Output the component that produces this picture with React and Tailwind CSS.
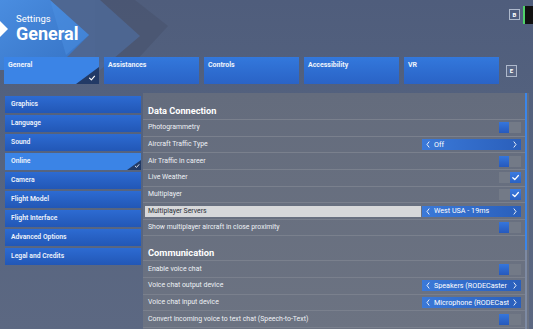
import React from "react";

const Check = ({ className = "" }) => (
  <svg viewBox="0 0 10 10" className={className} fill="none" stroke="white" strokeWidth="1.4" strokeLinecap="round" strokeLinejoin="round">
    <path d="M2 5.2 L4.2 7.3 L8.2 2.8" />
  </svg>
);

const Chev = ({ dir = "l" }) => (
  <svg viewBox="0 0 6 10" className="w-[4px] h-[7px] shrink-0" fill="none" stroke="white" strokeWidth="1.3" strokeLinecap="round" strokeLinejoin="round">
    {dir === "l" ? <path d="M4.5 1 L1.5 5 L4.5 9" /> : <path d="M1.5 1 L4.5 5 L1.5 9" />}
  </svg>
);

function Toggle({ on }) {
  return (
    <div className="w-[22px] h-[11px] bg-[#737a87] flex">
      {on ? (
        <div className="ml-auto w-[11px] h-[11px] bg-gradient-to-b from-[#3b7be0] to-[#2a62c4] flex items-center justify-center">
          <Check className="w-[9px] h-[9px]" />
        </div>
      ) : (
        <div className="w-[10px] h-[11px] bg-gradient-to-b from-[#3576dc] to-[#2659bd]" />
      )}
    </div>
  );
}

function Selector({ value }) {
  return (
    <div className="w-[99px] h-[11px] bg-gradient-to-r from-[#3b79d8] to-[#2a5fbb] flex items-center px-[4px] gap-[4px] text-white">
      <Chev dir="l" />
      <span className="flex-1 min-w-0 text-[7.2px] leading-none whitespace-nowrap overflow-hidden">{value}</span>
      <Chev dir="r" />
    </div>
  );
}

function Row({ label, control, highlight }) {
  return (
    <div className="h-[16.65px] flex items-center border-b border-[#7a808d] pl-[2px] pr-[4px]">
      <div className={`flex-1 h-[11px] flex items-center pl-[3px] mr-[1px] ${highlight ? "bg-[#d7d8da] text-[#2a2f38]" : "text-[#eef1f5]"}`}>
        <span className="text-[6.9px] leading-none whitespace-nowrap">{label}</span>
      </div>
      {control}
    </div>
  );
}

export default function App() {
  const tabs = ["General", "Assistances", "Controls", "Accessibility", "VR"];
  const side = ["Graphics", "Language", "Sound", "Online", "Camera", "Flight Model", "Flight Interface", "Advanced Options", "Legal and Credits"];
  return (
    <div className="w-[533px] h-[329px] overflow-hidden relative bg-gradient-to-b from-[#4f5d7c] via-[#56647f] to-[#5c6882] font-['Roboto',sans-serif]">
      {/* decorative header shapes */}
      <svg className="absolute left-0 top-0" width="533" height="95" viewBox="0 0 533 95">
        <defs>
          <linearGradient id="lb" x1="0" y1="0" x2="1" y2="1">
            <stop offset="0" stopColor="#4a8de0" />
            <stop offset="1" stopColor="#3572c4" />
          </linearGradient>
        </defs>
        <polygon points="95,0 135,0 168,26 135,62 95,62" fill="#48546f" opacity="0.7" />
        <polygon points="40,0 100,0 140,36 100,70 40,70" fill="#4d6896" opacity="0.85" />
        <polygon points="0,0 50,0 89,35 54,70 0,70" fill="url(#lb)" />
        <polygon points="50,0 89,35 66,55" fill="#4b8fe2" opacity="0.5" />
        <polygon points="0,21 8,29 0,37" fill="white" />
      </svg>

      {/* top-right */}
      <div className="absolute right-0 top-[6px] w-[10px] h-[18px] bg-[#111] border-l-2 border-[#4fd36a]" />
      <div className="absolute left-[509px] top-[9px] w-[11px] h-[11px] border border-[#aeb9cc] bg-[#4d5c7f] flex items-center justify-center">
        <span className="text-[6px] font-bold text-white leading-none">B</span>
      </div>

      <div className="relative flex flex-col">
        {/* title */}
        <div className="h-[57px] pl-[16px] pt-[14px] flex flex-col">
          <span className="text-[9.5px] text-white leading-none">Settings</span>
          <span className="text-[18px] font-bold text-white leading-none mt-[1px]">General</span>
        </div>

        {/* tabs */}
        <div className="flex items-center pl-[4px] gap-[5px] h-[27px]">
          {tabs.map((t, i) => (
            <div
              key={t}
              className={`relative w-[95px] h-[27px] px-[4px] pt-[5px] flex flex-col overflow-hidden ${i === 0 ? "bg-[#3b84e6]" : "bg-gradient-to-b from-[#3378dc] to-[#2a63c6]"}`}
            >
              <span className="block text-[7px] font-bold text-[#eef3fb] leading-none">{t}</span>
              {i === 0 && (
                <>
                  <svg className="absolute right-0 bottom-0" width="23" height="17" viewBox="0 0 23 17">
                    <polygon points="0,17 23,0 23,17" fill="#223a66" />
                  </svg>
                  <Check className="absolute right-[3px] bottom-[2px] w-[8px] h-[8px]" />
                </>
              )}
            </div>
          ))}
          <div className="ml-[2px] w-[11px] h-[12px] border border-[#aeb9cc] bg-[#5a6784] flex items-center justify-center">
            <span className="text-[6px] font-bold text-white leading-none">E</span>
          </div>
        </div>

        {/* main */}
        <div className="flex mt-[9px]">
          <div className="w-[136px] ml-[5px] pt-[3px] flex flex-col gap-[2px]">
            {side.map((s) => (
              <div
                key={s}
                className={`relative h-[17px] flex items-center pl-[6px] overflow-hidden ${s === "Online" ? "bg-[#3b84e6]" : "bg-gradient-to-b from-[#2d6bd2] to-[#2257b6]"}`}
              >
                <span className="text-[6.8px] font-semibold text-[#eef3fb] leading-none">{s}</span>
                {s === "Online" && (
                  <>
                    <svg className="absolute right-0 bottom-0" width="14" height="10" viewBox="0 0 14 10">
                      <polygon points="0,10 14,0 14,10" fill="#223a66" />
                    </svg>
                    <Check className="absolute right-[1px] bottom-[1px] w-[6px] h-[6px]" />
                  </>
                )}
              </div>
            ))}
          </div>

          <div className="ml-[2px] w-[386px] h-[236px] bg-gradient-to-b from-[#646c7d] to-[#6c7382] flex">
            <div className="flex-1 flex flex-col">
              <div className="h-[27px] flex items-end pb-[4px] pl-[5px] border-b border-[#7a808d]">
                <span className="text-[9.2px] font-bold text-white leading-none">Data Connection</span>
              </div>
              <Row label="Photogrammetry" control={<Toggle on={false} />} />
              <Row label="Aircraft Traffic Type" control={<Selector value="Off" />} />
              <Row label="Air Traffic in career" control={<Toggle on={false} />} />
              <Row label="Live Weather" control={<Toggle on />} />
              <Row label="Multiplayer" control={<Toggle on />} />
              <Row label="Multiplayer Servers" highlight control={<Selector value="West USA - 19ms" />} />
              <Row label="Show multiplayer aircraft in close proximity" control={<Toggle on={false} />} />
              <div className="h-[25px] flex items-end pb-[3px] pl-[5px] border-b border-[#7a808d]">
                <span className="text-[9.3px] font-bold text-white leading-none">Communication</span>
              </div>
              <Row label="Enable voice chat" control={<Toggle on={false} />} />
              <Row label="Voice chat output device" control={<Selector value="Speakers (RODECaster Duo)" />} />
              <Row label="Voice chat input device" control={<Selector value="Microphone (RODECaster Duo)" />} />
              <Row label="Convert incoming voice to text chat (Speech-to-Text)" control={<Toggle on={false} />} />
            </div>
            <div className="w-[4px] flex flex-col">
              <div className="w-[2px] h-[157px] bg-[#3a86ea]" />
              <div className="w-[2px] flex-1 bg-[#7d8aa3]" />
            </div>
          </div>
        </div>
      </div>
    </div>
  );
}
